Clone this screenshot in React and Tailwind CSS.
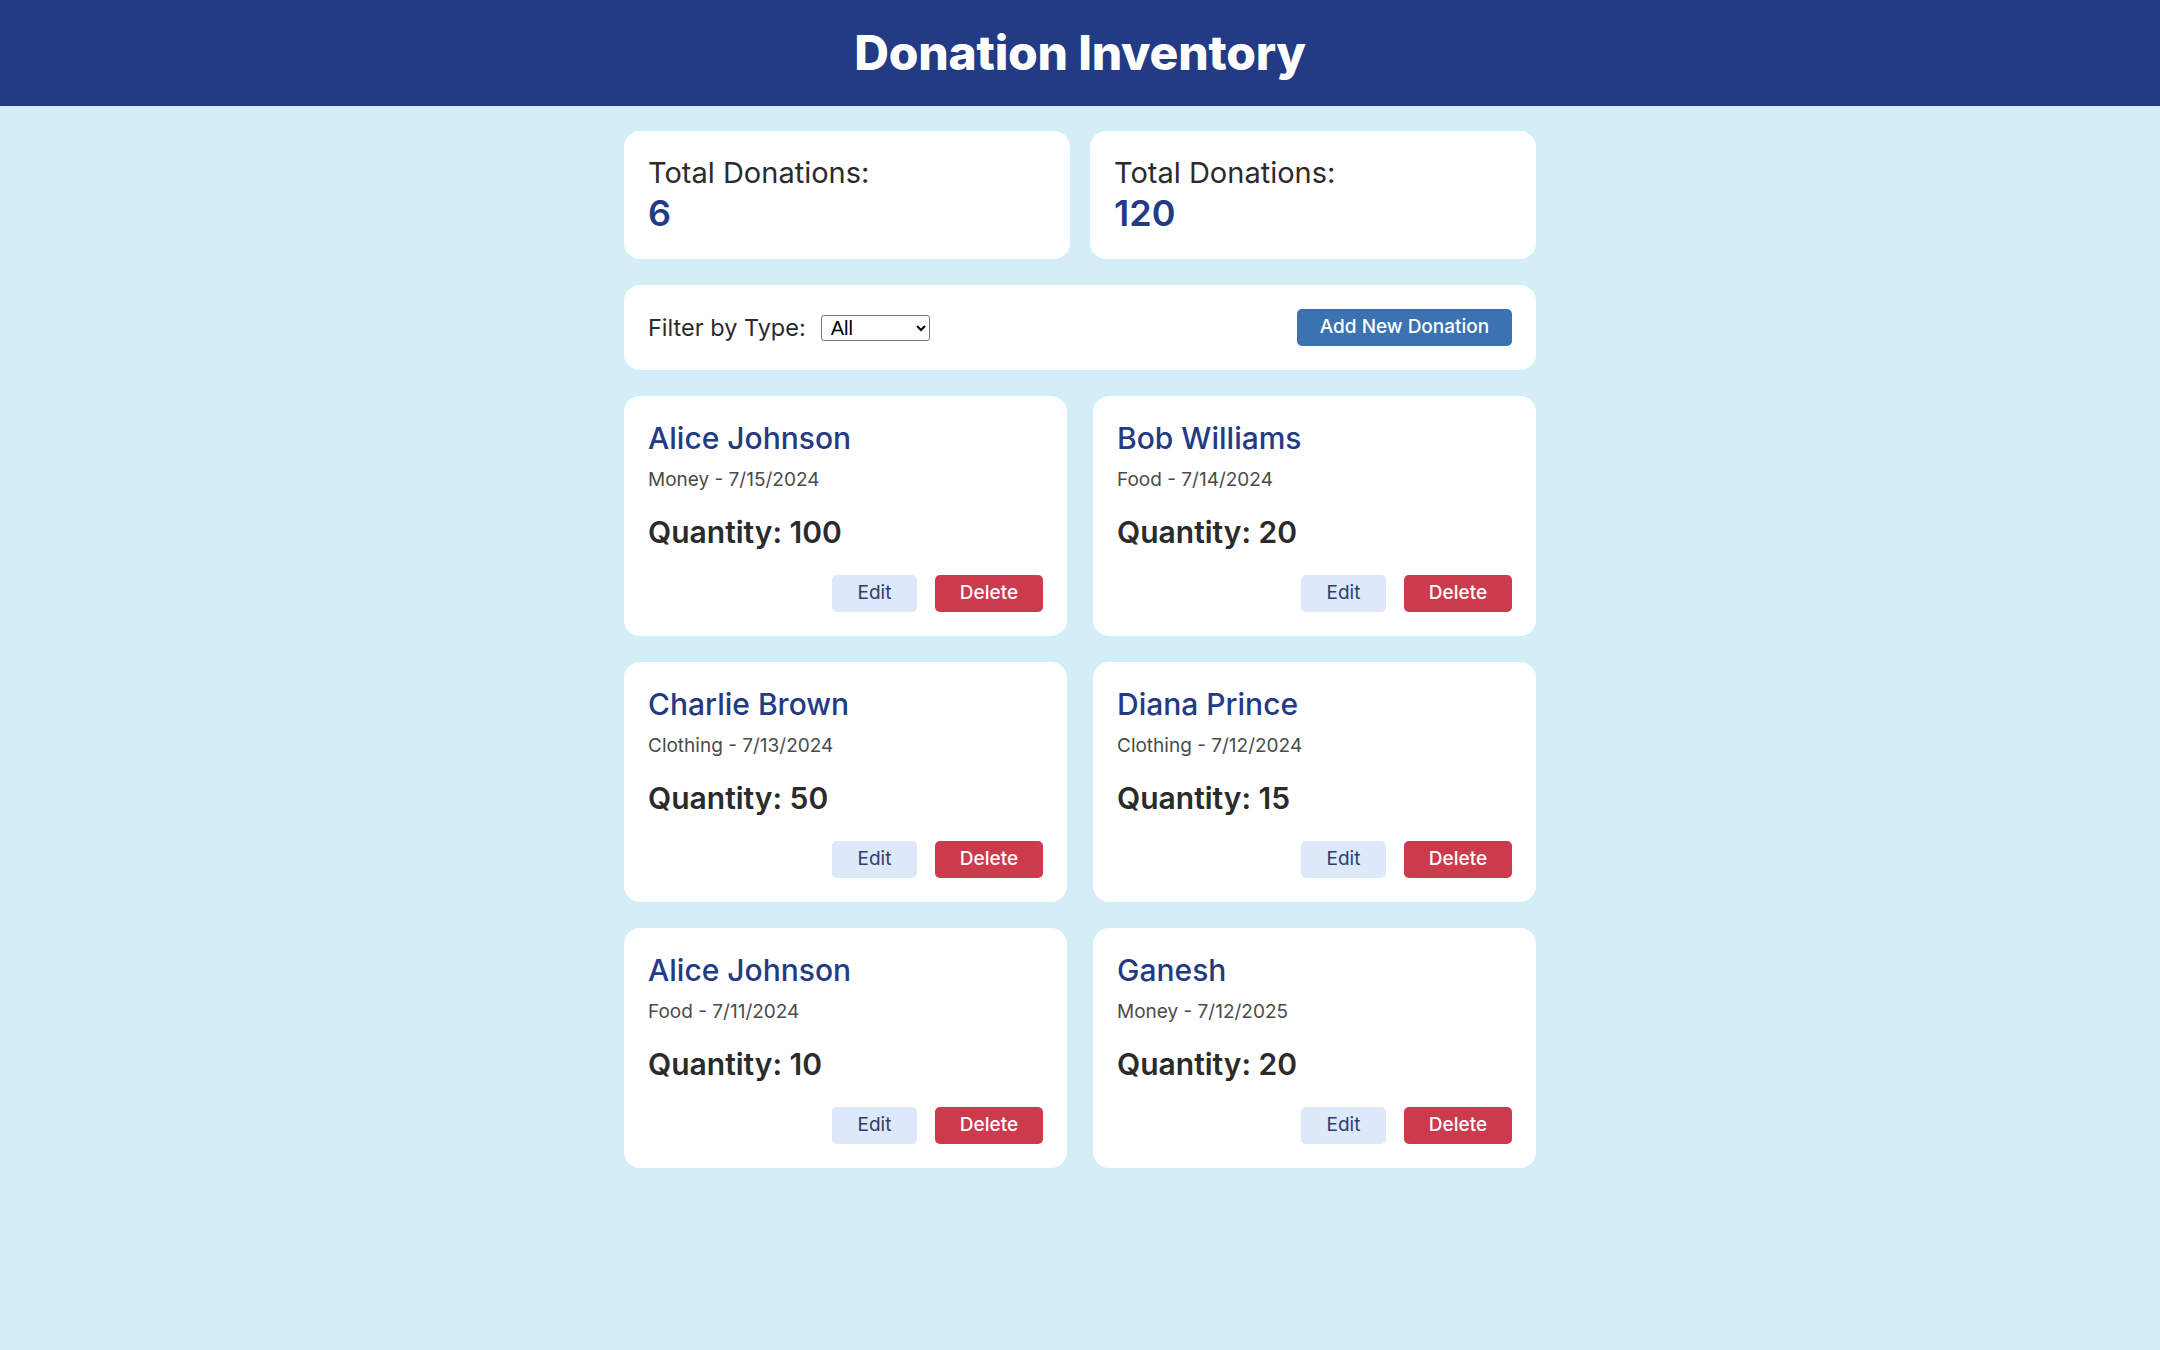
import React, { useState } from 'react';

const donations = [
  { id: 1, donor: 'Alice Johnson', type: 'Money', date: '7/15/2024', quantity: 100 },
  { id: 2, donor: 'Bob Williams', type: 'Food', date: '7/14/2024', quantity: 20 },
  { id: 3, donor: 'Charlie Brown', type: 'Clothing', date: '7/13/2024', quantity: 50 },
  { id: 4, donor: 'Diana Prince', type: 'Clothing', date: '7/12/2024', quantity: 15 },
  { id: 5, donor: 'Alice Johnson', type: 'Food', date: '7/11/2024', quantity: 10 },
  { id: 6, donor: 'Ganesh', type: 'Money', date: '7/12/2025', quantity: 20 },
];

const App = () => {
  const [filter, setFilter] = useState('All');
  const list = filter === 'All' ? donations : donations.filter(d => d.type === filter);
  // second card shows a fixed total in the original
  const totalQty = 120;

  return (
    <div className="min-h-screen bg-[#d4eef7] font-['Inter',sans-serif]">
      <header className="h-[106px] bg-[#233a85] flex items-center justify-center">
        <h1 className="text-[48px] font-extrabold text-white tracking-[-0.2px]">Donation Inventory</h1>
      </header>

      <main className="w-[912px] mx-auto pt-[25px] pb-10">
        <div className="grid grid-cols-2 gap-[20px] mb-[26px]">
          <div className="bg-white rounded-[16px] h-[128px] px-6 pt-[23px]">
            <p className="text-[29px] leading-[37px] text-[#2b2b2b]">Total Donations:</p>
            <p className="text-[36px] leading-[44px] font-semibold text-[#233a85]">{donations.length}</p>
          </div>
          <div className="bg-white rounded-[16px] h-[128px] px-6 pt-[23px]">
            <p className="text-[29px] leading-[37px] text-[#2b2b2b]">Total Donations:</p>
            <p className="text-[36px] leading-[44px] font-semibold text-[#233a85]">{totalQty}</p>
          </div>
        </div>

        <div className="bg-white rounded-[16px] h-[85px] px-6 flex items-center justify-between mb-[26px]">
          <div className="flex items-center gap-[15px]">
            <label className="text-[23.5px] text-[#2b2b2b]">Filter by Type:</label>
            <select
              value={filter}
              onChange={e => setFilter(e.target.value)}
              className="w-[109px] h-[26px] border border-[#767676] rounded-[3px] text-[20px] leading-[24px] font-['Liberation_Sans',sans-serif] text-black pl-[5px]"
            >
              <option>All</option>
              <option>Money</option>
              <option>Food</option>
              <option>Clothing</option>
            </select>
          </div>
          <button className="w-[215px] h-[37px] bg-[#3b73b0] text-white text-[19px] font-medium rounded-[5px]">
            Add New Donation
          </button>
        </div>

        <div className="grid grid-cols-2 gap-x-[26px] gap-y-[26px]">
          {list.map(d => (
            <div key={d.id} className="bg-white rounded-[16px] h-[240px] p-6 flex flex-col">
              <h2 className="text-[30px] leading-[36px] font-medium text-[#233a85]">{d.donor}</h2>
              <p className="text-[19px] text-[#4a4a4a] mt-[10px]">{d.type} - {d.date}</p>
              <p className="text-[30px] font-semibold text-[#2b2b2b] mt-[15px]">Quantity: {d.quantity}</p>
              <div className="mt-auto flex justify-end gap-[18px]">
                <button className="w-[85px] h-[37px] bg-[#dde8f9] text-[#2c3e70] text-[19px] rounded-[5px]">Edit</button>
                <button className="w-[108px] h-[37px] bg-[#cc3a4e] text-white text-[19px] font-medium rounded-[5px]">Delete</button>
              </div>
            </div>
          ))}
        </div>
      </main>
    </div>
  );
};

export default App;
